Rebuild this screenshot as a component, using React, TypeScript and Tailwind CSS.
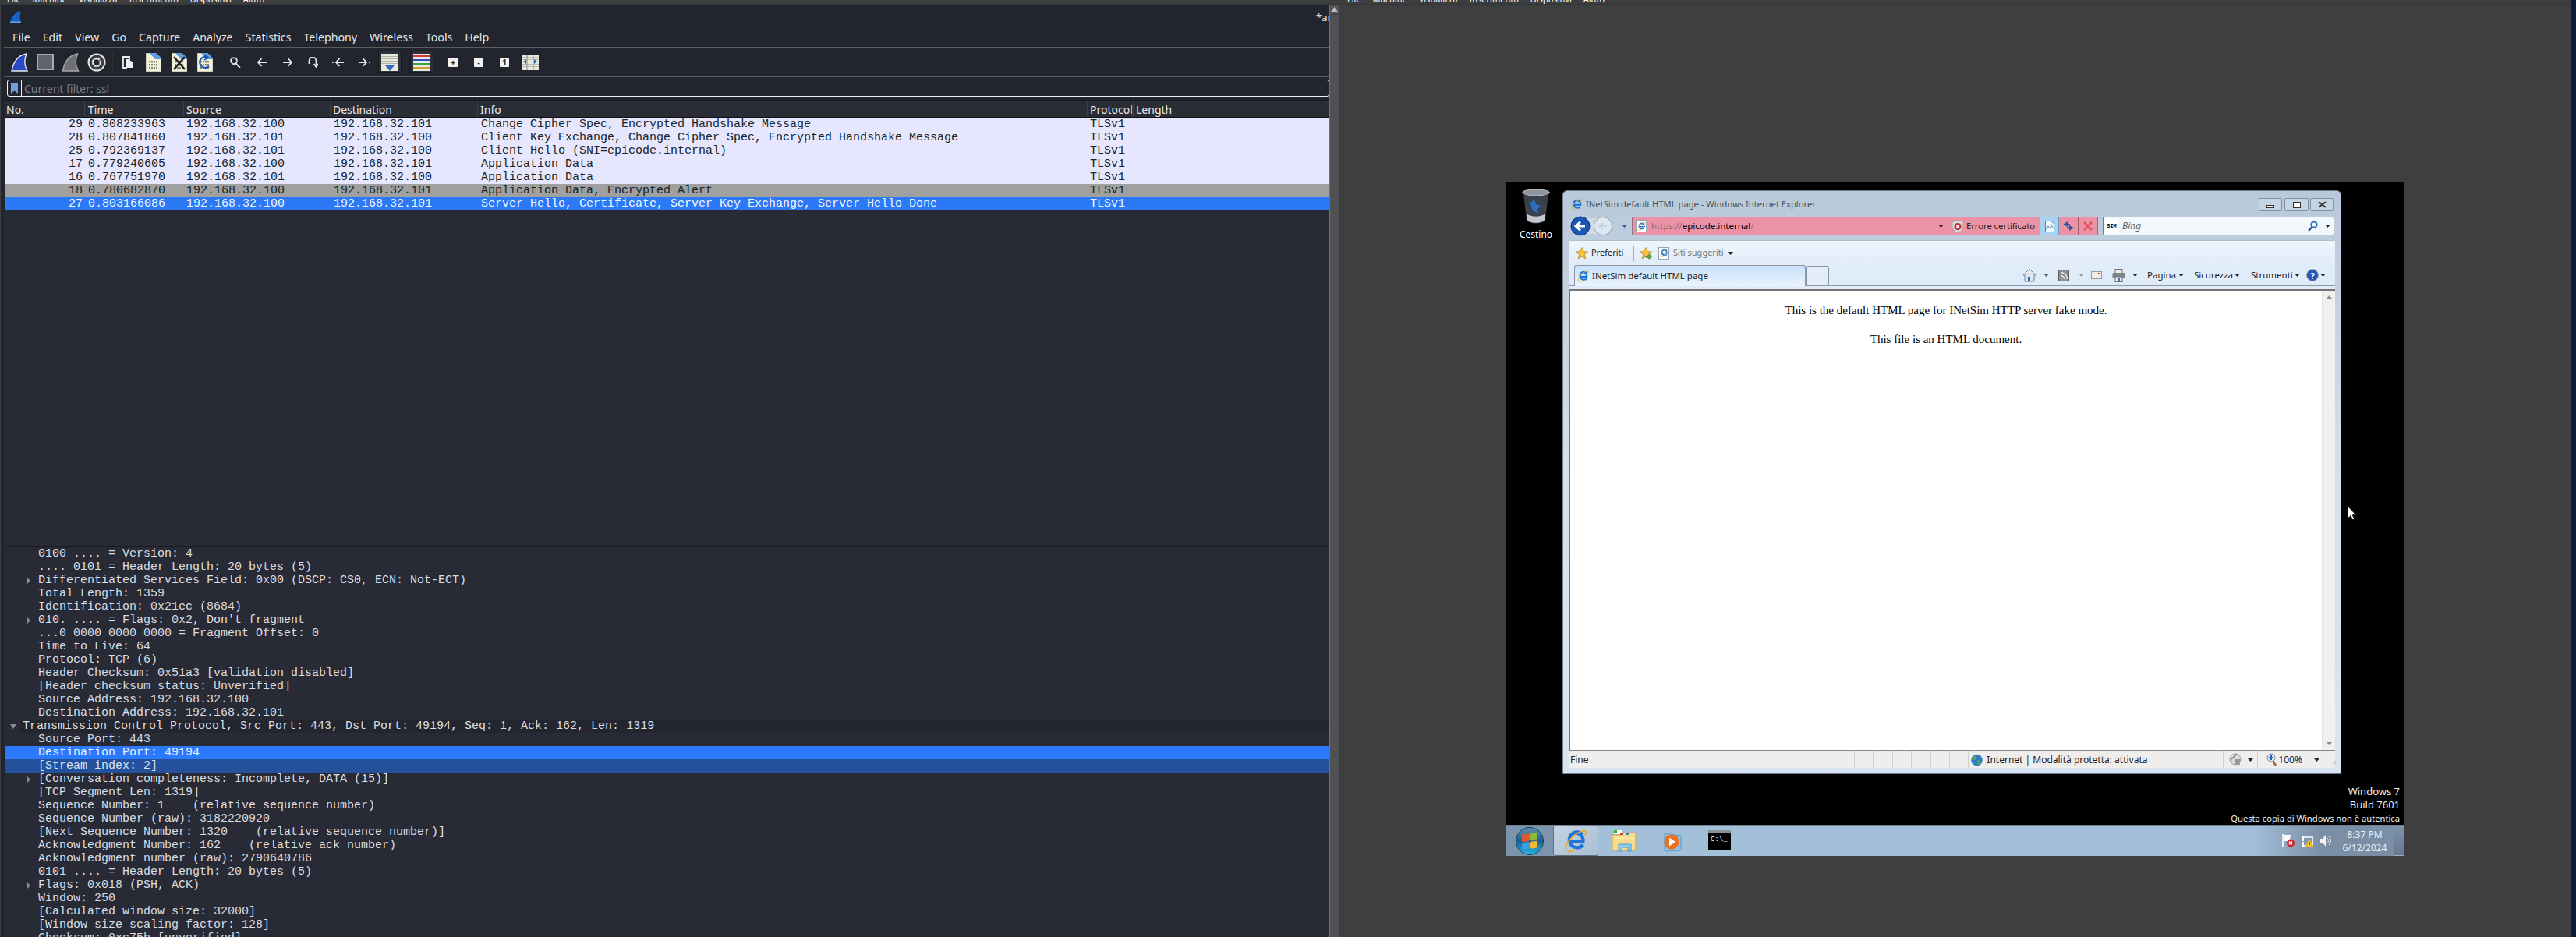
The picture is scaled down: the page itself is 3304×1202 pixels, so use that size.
import React from "react";

const UI = { fontFamily: '"Noto Sans", sans-serif' };
const MONO = { fontFamily: '"Liberation Mono", monospace' };
const SERIF = { fontFamily: '"Liberation Serif", serif' };

function Mnemonic({ t, i = 0 }: { t: string; i?: number }) {
  return (
    <span>
      {t.slice(0, i)}
      <span className="underline underline-offset-[3px] decoration-1">{t[i]}</span>
      {t.slice(i + 1)}
    </span>
  );
}

function Fin({ w = 22, h = 24, fill = "#2b49c6", stroke = "#e8e8e8" }: { w?: number; h?: number; fill?: string; stroke?: string }) {
  return (
    <svg width={w} height={h} viewBox="0 0 22 24" className="shrink-0">
      <path d="M1 23 C3 12 9 3 20 1 C17 8 17 16 21 23 Z" fill={fill} stroke={stroke} strokeWidth="1.4" />
    </svg>
  );
}

function DocIcon({ kind }: { kind: "plain" | "x" | "reload" }) {
  return (
    <svg width="20" height="24" viewBox="0 0 20 24" className="shrink-0">
      <path d="M0.5 0.5 H13 L19.5 6.5 V23.5 H0.5 Z" fill="#f3f1d8" stroke="#cfd2c0" strokeWidth="1" />
      <path d="M5 0 H13 L20 6.5 V8 H12 Z" fill="#5f9bdc" />
      <g fill="#7c7e72">
        {[10, 14, 18].map((y) =>
          [4, 7, 10, 13].map((x) => <rect key={`${x}-${y}`} x={x} y={y} width="2" height="2.4" />)
        )}
      </g>
      {kind === "x" && <path d="M3 5 L17 21 M17 5 L3 21" stroke="#1c1c1c" strokeWidth="2.4" />}
      {kind === "reload" && (
        <g fill="none" stroke="#1f55b8" strokeWidth="2.2">
          <path d="M14 6 A7 7 0 1 0 15 17" />
          <path d="M9 2 L14 6 L9 9" strokeWidth="1.6" />
        </g>
      )}
    </svg>
  );
}

function Stroke({ w = 14, h = 14, d, vb = "0 0 14 14", sw = 1.8 }: { w?: number; h?: number; d: string; vb?: string; sw?: number }) {
  return (
    <svg width={w} height={h} viewBox={vb} className="shrink-0">
      <path d={d} fill="none" stroke="#e6e6e6" strokeWidth={sw} />
    </svg>
  );
}

function Tbtn({ c }: { c: string }) {
  return (
    <div className="w-[12px] h-[12px] bg-[#f2f2f2] rounded-[1px] flex items-center justify-center text-[#222] text-[10px] font-bold leading-none shrink-0" style={UI}>
      {c}
    </div>
  );
}

function Toolbar() {
  return (
    <div className="h-[38px] flex items-center border-b border-[#5b5d62] pl-[9px]">
      <Fin />
      <div className="ml-[11px] w-[22px] h-[21px] bg-[#62646c] border-[2px] border-[#a9abb0] shrink-0" />
      <div className="ml-[10px]">
        <Fin w={23} fill="#6e7075" stroke="#a6a8ab" />
      </div>
      <svg width="24" height="24" viewBox="0 0 24 24" className="ml-[10px] shrink-0">
        <circle cx="12" cy="12" r="10.5" fill="#3a3c42" stroke="#e6e6e6" strokeWidth="2" />
        <circle cx="12" cy="12" r="5" fill="none" stroke="#e6e6e6" strokeWidth="2.4" strokeDasharray="3 1" />
        <circle cx="12" cy="12" r="2.6" fill="#22252e" />
      </svg>
      <div className="ml-[8px] w-px h-[24px] bg-[#2f3239] shrink-0" />
      <svg width="15" height="16" viewBox="0 0 15 16" className="ml-[12px] shrink-0">
        <path d="M1 1 H9 V5 H5 V15 H1 Z" fill="none" stroke="#f0f0f0" strokeWidth="1.8" />
        <path d="M5 6 H11 L14 9 V15 H5 Z" fill="#f0f0f0" />
      </svg>
      <div className="ml-[15px]"><DocIcon kind="plain" /></div>
      <div className="ml-[13px]"><DocIcon kind="x" /></div>
      <div className="ml-[13px]"><DocIcon kind="reload" /></div>
      <div className="ml-[10px] w-px h-[24px] bg-[#2f3239] shrink-0" />
      <div className="ml-[11px]"><Stroke d="M9 5.2 A4 4 0 1 1 9 5 M8 9 L13 14" /></div>
      <div className="ml-[20px]"><Stroke d="M13 7 H2 M6.5 2 L2 7 L6.5 12" /></div>
      <div className="ml-[19px]"><Stroke d="M1 7 H12 M7.5 2 L12 7 L7.5 12" /></div>
      <div className="ml-[18px]"><Stroke d="M2.5 9 V5 A4 4 0 0 1 11.5 5 V12 M8.5 9 L11.5 13 L14 9" /></div>
      <div className="ml-[18px]"><Stroke w={16} vb="0 0 16 14" d="M15 7 H6 M9.5 2 L5 7 L9.5 12 M1 6 V8" /></div>
      <div className="ml-[17px]"><Stroke w={16} vb="0 0 16 14" d="M1 7 H10 M6.5 2 L11 7 L6.5 12 M15 6 V8" /></div>
      <div className="ml-[10px] w-[30px] h-[29px] bg-[#2d3038] border border-[#17191e] rounded-[3px] flex items-center justify-center shrink-0">
        <svg width="24" height="24" viewBox="0 0 24 24">
          <rect x="1" y="1" width="22" height="22" fill="#e9e9dd" />
          {[4, 7, 10, 13].map((y) => <rect key={y} x="1" y={y} width="22" height="1" fill="#b3b3a8" />)}
          <path d="M6 16 H18 L12 23 Z" fill="#2f6cc0" />
        </svg>
      </div>
      <div className="ml-[11px] w-[30px] h-[29px] bg-[#2d3038] border border-[#17191e] rounded-[3px] flex items-center justify-center shrink-0">
        <svg width="24" height="24" viewBox="0 0 24 24">
          <rect x="1" y="1" width="22" height="22" fill="#e9e9e9" />
          <rect x="1" y="3" width="22" height="2" fill="#d23a32" />
          <rect x="1" y="8" width="22" height="2" fill="#2f4fc0" />
          <rect x="1" y="13" width="22" height="2" fill="#3aa63a" />
          <rect x="1" y="18" width="22" height="2" fill="#d0a020" />
        </svg>
      </div>
      <div className="ml-[19px]"><Tbtn c="+" /></div>
      <div className="ml-[21px]"><Tbtn c="-" /></div>
      <div className="ml-[21px]"><Tbtn c="1" /></div>
      <svg width="22" height="20" viewBox="0 0 22 20" className="ml-[16px] shrink-0">
        <rect width="22" height="20" fill="#e9e9dd" />
        {[3, 6, 9, 12, 15, 18].map((y) => <rect key={y} y={y} width="22" height="1" fill="#bcbcb0" />)}
        <path d="M7 0 V20 M15 0 V20" stroke="#8a8a80" />
        <path d="M6 6 L2 9 L6 12 Z M16 6 L20 9 L16 12 Z" fill="#2f6cc0" />
      </svg>
    </div>
  );
}

const PACKETS = [
  ["29", "0.808233963", "192.168.32.100", "192.168.32.101", "Change Cipher Spec, Encrypted Handshake Message"],
  ["28", "0.807841860", "192.168.32.101", "192.168.32.100", "Client Key Exchange, Change Cipher Spec, Encrypted Handshake Message"],
  ["25", "0.792369137", "192.168.32.101", "192.168.32.100", "Client Hello (SNI=epicode.internal)"],
  ["17", "0.779240605", "192.168.32.100", "192.168.32.101", "Application Data"],
  ["16", "0.767751970", "192.168.32.101", "192.168.32.100", "Application Data"],
  ["18", "0.780682870", "192.168.32.100", "192.168.32.101", "Application Data, Encrypted Alert"],
  ["27", "0.803166086", "192.168.32.100", "192.168.32.101", "Server Hello, Certificate, Server Key Exchange, Server Hello Done"],
];

function PacketRow({ p, i }: { p: string[]; i: number }) {
  const bg = i === 6 ? "bg-[#2b79f6] text-[#f2f6fd]" : i === 5 ? "bg-[#a0a0a0] text-[#12272e]" : "bg-[#e7e6ff] text-[#12272e]";
  return (
    <div className={`h-[17px] flex relative whitespace-pre text-[15px] leading-[17px] ${bg}`} style={MONO}>
      {i < 3 && <div className="absolute left-[9px] top-0 bottom-0 w-px bg-[#12272e]" />}
      {i === 6 && <div className="absolute left-[9px] top-0 bottom-0 w-px bg-[#9cc0fa]" />}
      <div className="w-[100px] text-right">{p[0]}</div>
      <div className="w-[133px] pl-[7px]">{p[1]}</div>
      <div className="w-[189px]">{p[2]}</div>
      <div className="w-[189px]">{p[3]}</div>
      <div className="w-[781px]">{p[4]}</div>
      <div>TLSv1</div>
    </div>
  );
}

const TREE: [string, number, string?][] = [
  ["0100 .... = Version: 4", 0],
  [".... 0101 = Header Length: 20 bytes (5)", 0],
  ["Differentiated Services Field: 0x00 (DSCP: CS0, ECN: Not-ECT)", 1],
  ["Total Length: 1359", 0],
  ["Identification: 0x21ec (8684)", 0],
  ["010. .... = Flags: 0x2, Don't fragment", 1],
  ["...0 0000 0000 0000 = Fragment Offset: 0", 0],
  ["Time to Live: 64", 0],
  ["Protocol: TCP (6)", 0],
  ["Header Checksum: 0x51a3 [validation disabled]", 0],
  ["[Header checksum status: Unverified]", 0],
  ["Source Address: 192.168.32.100", 0],
  ["Destination Address: 192.168.32.101", 0],
  ["Transmission Control Protocol, Src Port: 443, Dst Port: 49194, Seq: 1, Ack: 162, Len: 1319", 2],
  ["Source Port: 443", 0],
  ["Destination Port: 49194", 0, "sel"],
  ["[Stream index: 2]", 0, "rel"],
  ["[Conversation completeness: Incomplete, DATA (15)]", 1],
  ["[TCP Segment Len: 1319]", 0],
  ["Sequence Number: 1    (relative sequence number)", 0],
  ["Sequence Number (raw): 3182220920", 0],
  ["[Next Sequence Number: 1320    (relative sequence number)]", 0],
  ["Acknowledgment Number: 162    (relative ack number)", 0],
  ["Acknowledgment number (raw): 2790640786", 0],
  ["0101 .... = Header Length: 20 bytes (5)", 0],
  ["Flags: 0x018 (PSH, ACK)", 1],
  ["Window: 250", 0],
  ["[Calculated window size: 32000]", 0],
  ["[Window size scaling factor: 128]", 0],
  ["Checksum: 0xc75b [unverified]", 0],
];

function TreeRow({ r }: { r: [string, number, string?] }) {
  const [t, kind, state] = r;
  const bg = state === "sel" ? "bg-[#2b79fd] text-[#e9f1ff]" : state === "rel" ? "bg-[#24509c] text-[#d9e2f2]" : "text-[#dcdde0]";
  if (kind === 2) {
    return (
      <div className="h-[17px] flex items-center whitespace-pre text-[15px] leading-[17px] text-[#dcdde0]" style={MONO}>
        <svg width="8" height="6" viewBox="0 0 8 6" className="ml-[7px] shrink-0"><path d="M0 0 H8 L4 6 Z" fill="#8a8c92" /></svg>
        <div className="ml-[5px] flex-1 pl-[3px] bg-[#23262f]">{t}</div>
      </div>
    );
  }
  return (
    <div className={`h-[17px] flex items-center whitespace-pre text-[15px] leading-[17px] ${bg}`} style={MONO}>
      <div className="w-[43px] flex justify-end pr-[10px] shrink-0">
        {kind === 1 && <svg width="5" height="10" viewBox="0 0 5 10"><path d="M0 0 L5 5 L0 10 Z" fill="#8a8c92" /></svg>}
      </div>
      <div>{t}</div>
    </div>
  );
}

function Wireshark() {
  const hdr = [
    ["No.", "w-[102px] pl-[2px]"],
    ["Time", "w-[127px] pl-[4px] border-l border-[#3d4048]"],
    ["Source", "w-[188px] pl-[3px] border-l border-[#3d4048]"],
    ["Destination", "w-[189px] pl-[3px] border-l border-[#3d4048]"],
    ["Info", "w-[782px] pl-[3px] border-l border-[#3d4048]"],
    ["Protocol", "w-[59px] pl-[3px] border-l border-[#3d4048]"],
    ["Length", "flex-1 pl-[3px] border-l border-[#3d4048]"],
  ];
  const menu: [string, number][] = [["File", 0], ["Edit", 0], ["View", 0], ["Go", 0], ["Capture", 0], ["Analyze", 0], ["Statistics", 0], ["Telephony", 0], ["Wireless", 0], ["Tools", 0], ["Help", 0]];
  return (
    <div className="w-[1718px] h-[1202px] shrink-0 flex flex-col border-r border-[#8f9092]">
      <TopStrip pl="pl-[9px]" />
      <div className="flex-1 flex min-h-0">
        <div className="ml-px w-[1704px] bg-[#22252e] border-t border-[#15171c] rounded-tl-[3px] pl-[4px] flex flex-col text-[#e8e8e8] overflow-hidden" style={UI}>
          <div className="h-[29px] flex items-start justify-between shrink-0">
            <svg width="16" height="16" viewBox="0 0 16 16" className="ml-[7px] mt-[7px]">
              <path d="M1 15 C2 8 7 2 15 0 C13 5 13 10 15 15 Z" fill="#1a62c8" />
              <path d="M1 15 H15 L14.6 13.5 H1.4 Z" fill="#67a6ec" />
            </svg>
            <span className="mt-[9px] text-[13px] leading-[13px] w-[17px] overflow-hidden whitespace-nowrap">*an</span>
          </div>
          <div className="h-[25px] shrink-0 flex items-center gap-[16px] pl-[11px] border-b border-[#5b5d62] text-[14.2px]">
            {menu.map(([m, i]) => <Mnemonic key={m} t={m} i={i} />)}
          </div>
          <div className="shrink-0"><Toolbar /></div>
          <div className="shrink-0 mt-[3px] ml-[4px] h-[22px] border border-[#f0f0f0] rounded-[3px] flex items-center">
            <div className="w-[18px] h-full border-r border-[#f0f0f0] flex items-center justify-center shrink-0">
              <svg width="9" height="14" viewBox="0 0 9 14"><path d="M0 0 H9 V14 L4.5 10.5 L0 14 Z" fill="#6d9fdc" /></svg>
            </div>
            <span className="ml-[3px] text-[14px] text-[#7c7e83]">Current filter: ssl</span>
          </div>
          <div className="shrink-0 h-[5px] border-b border-[#191b20]" />
          <div className="shrink-0 ml-px h-[22px] flex bg-[#2a2d36] border-b border-[#0e0f13] text-[14px] leading-[23px] whitespace-nowrap">
            {hdr.map(([t, c]) => <div key={t} className={c}>{t}</div>)}
          </div>
          <div className="shrink-0 ml-px">
            {PACKETS.map((p, i) => <PacketRow key={p[0]} p={p} i={i} />)}
          </div>
          <div className="flex-1 ml-px bg-[#282b36]" />
          <div className="shrink-0 ml-px h-[6px] bg-[#282b36] border-y border-[#1a1c22]" />
          <div className="shrink-0 ml-px h-[500px] bg-[#282a35] overflow-hidden">
            {TREE.map((r) => <TreeRow key={r[0]} r={r} />)}
          </div>
        </div>
        <div className="flex-1 bg-[#4f5152] border-l border-[#6f7173] flex flex-col">
          <div className="h-[13px] border-b border-[#3a3b3d] flex items-center justify-center">
            <svg width="9" height="6" viewBox="0 0 9 6"><path d="M0 6 L4.5 0 L9 6 Z" fill="#b9bbbd" /></svg>
          </div>
        </div>
      </div>
    </div>
  );
}

function TopStrip({ pl }: { pl: string }) {
  return (
    <div className={`h-[6px] shrink-0 overflow-hidden bg-[#3c3d3f] border-b border-[#343537] ${pl}`}>
      <div className="-mt-[11px] flex gap-[15px] text-[11px] leading-[20px] text-white whitespace-nowrap" style={UI}>
        <span>File</span><span>Machine</span><span>Visualizza</span><span>Inserimento</span><span>Dispositivi</span><span>Aiuto</span>
      </div>
    </div>
  );
}

function IELogo({ s = 16 }: { s?: number }) {
  return (
    <svg width={s} height={s} viewBox="0 0 24 24" className="shrink-0">
      <path d="M19 5 A8 8 0 1 0 19.5 16 M5 12.5 H19.5 V10 A7.5 7.5 0 0 0 6 7" fill="none" stroke="#1f74d8" strokeWidth="3.4" />
      <path d="M2 22 C0 17 8 5 18 2 C23 0 24 3 21 7 M3 22 C5 24 9 22 12 20" fill="none" stroke="#e8ac2a" strokeWidth="1.4" />
    </svg>
  );
}

function Caret({ c = "#222", className = "" }: { c?: string; className?: string }) {
  return (
    <svg width="7" height="4" viewBox="0 0 7 4" className={`shrink-0 ${className}`}>
      <path d="M0 0 H7 L3.5 4 Z" fill={c} />
    </svg>
  );
}

function StarIcon({ add = false }: { add?: boolean }) {
  return (
    <svg width="16" height="16" viewBox="0 0 16 16" className="shrink-0">
      <path d="M8 0.5 L10.2 5.6 L15.5 6 L11.4 9.6 L12.8 15 L8 12 L3.2 15 L4.6 9.6 L0.5 6 L5.8 5.6 Z" fill="#f7c23c" stroke="#b57d14" strokeWidth="0.7" />
      {add && <path d="M8 11 H12 V8.5 L16 12 L12 15.5 V13.5 H8 Z" fill="#47b23c" stroke="#2b7a25" strokeWidth="0.5" />}
    </svg>
  );
}

function DocLogo() {
  return (
    <div className="w-[14px] h-[16px] bg-white border border-[#9aa6b2] flex items-center justify-center shrink-0">
      <IELogo s={11} />
    </div>
  );
}

function IEWindow() {
  const nav = (
    <div className="h-[24px] flex shrink-0">
      <div className="w-[81px] flex items-center shrink-0">
        <svg width="58" height="26" viewBox="0 0 58 26" className="ml-[3px] shrink-0 overflow-visible">
          <rect x="10" y="3" width="38" height="20" rx="10" fill="#cfdbe6" />
          <circle cx="41" cy="13" r="11.5" fill="#dfe8f0" stroke="#8fa0b0" />
          <path d="M36 13 H46 M41 9 L36 13 L41 17" fill="none" stroke="#c4d0db" strokeWidth="2" />
          <circle cx="12" cy="13" r="12" fill="#1a55b4" stroke="#0e2f66" />
          <path d="M6 13 H18 M12 7.5 L6 13 L12 18.5" fill="none" stroke="#fff" strokeWidth="3" />
        </svg>
        <Caret c="#2d5c9c" className="ml-[7px]" />
      </div>
      <div className="w-[598px] shrink-0 bg-[#ec92a6] border border-[#8d7480] flex items-center text-[11.5px]">
        <div className="ml-[4px]"><DocLogo /></div>
        <span className="ml-[6px] text-[#8d6b76]">https://<span className="text-black">epicode.internal</span>/</span>
        <div className="flex-1" />
        <Caret />
        <svg width="14" height="17" viewBox="0 0 14 17" className="ml-[11px] shrink-0">
          <path d="M7 0 L14 2.5 V9 C14 13 10 16 7 17 C4 16 0 13 0 9 V2.5 Z" fill="#d8d8d8" stroke="#8a8a8a" strokeWidth="0.6" />
          <circle cx="7" cy="8.5" r="4.6" fill="#cc2a36" />
          <path d="M5 6.5 L9 10.5 M9 6.5 L5 10.5" stroke="#fff" strokeWidth="1.4" />
        </svg>
        <span className="ml-[4px] text-[11.2px] text-[#1d1d1d] whitespace-nowrap w-[94px]">Errore certificato</span>
        <div className="w-[25px] h-full bg-[#a6d3ef] border-x border-[#6d9cc0] flex items-center justify-center shrink-0">
          <svg width="12" height="15" viewBox="0 0 12 15">
            <path d="M0.5 0.5 H8 L11.5 4 V14.5 H0.5 Z" fill="#eef6fb" stroke="#4f86b8" />
            <path d="M1 11 L4 7 L6 10 L8 6 L11 10" fill="none" stroke="#4f86b8" />
          </svg>
        </div>
        <div className="w-[25px] h-full border-r border-[#a35a6e] flex items-center justify-center shrink-0">
          <svg width="16" height="14" viewBox="0 0 16 14">
            <path d="M7 1 L1 5 L7 8 V6 H10 V4 H7 Z M9 13 L15 9 L9 6 V8 H6 V10 H9 Z" fill="#1f5fa8" />
          </svg>
        </div>
        <div className="w-[24px] h-full flex items-center justify-center shrink-0">
          <svg width="12" height="12" viewBox="0 0 12 12"><path d="M1 1 L11 11 M11 1 L1 11" stroke="#e0525c" strokeWidth="2.6" /></svg>
        </div>
      </div>
      <div className="w-[297px] ml-[6px] shrink-0 bg-[#f3f8fc] border border-[#707e8c] rounded-[2px] flex items-center text-[12px]">
        <div className="ml-[2px] w-[17px] h-[18px] bg-white flex items-center justify-center text-[7px] font-bold text-black" style={MONO}>SIM</div>
        <span className="ml-[5px] italic text-[#5a6570]">Bing</span>
        <div className="flex-1" />
        <svg width="13" height="14" viewBox="0 0 13 14" className="shrink-0">
          <circle cx="8" cy="5" r="3.6" fill="none" stroke="#2a6fc0" strokeWidth="2" />
          <path d="M5.5 8 L1 13" stroke="#1e4f90" strokeWidth="2.2" />
        </svg>
        <Caret className="ml-[9px] mr-[4px]" />
      </div>
    </div>
  );

  return (
    <div className="absolute left-[72px] top-[10px] w-[999px] h-[749px] rounded-t-[6px] border border-[#6f7d8a] bg-gradient-to-b from-[#b8c9d9] via-[#d4e2ef] to-[#d8e5f2] px-[7px] pt-[9px] flex flex-col" style={UI}>
      <div className="h-[17px] flex items-center shrink-0">
        <div className="ml-[3px]"><IELogo s={15} /></div>
        <span className="ml-[4px] text-[11.2px] text-[#46525e] whitespace-nowrap">INetSim default HTML page - Windows Internet Explorer</span>
        <div className="flex-1" />
        <div className="w-[30px] h-[17px] border border-[#7f93a6] rounded-[2px] bg-[#c6d5e4] flex items-end justify-center pb-[3px]">
          <div className="w-[10px] h-[4px] border border-[#333] bg-white" />
        </div>
        <div className="ml-[3px] w-[31px] h-[17px] border border-[#7f93a6] rounded-[2px] bg-[#c6d5e4] flex items-center justify-center">
          <div className="w-[10px] h-[8px] border-[1.5px] border-[#333] bg-white" />
        </div>
        <div className="ml-[2px] mr-[2px] w-[30px] h-[17px] border border-[#7f93a6] rounded-[2px] bg-[#c6d5e4] flex items-center justify-center">
          <svg width="11" height="9" viewBox="0 0 11 9"><path d="M1 1 L10 8 M10 1 L1 8" stroke="#3b3b3b" strokeWidth="2" /></svg>
        </div>
      </div>
      <div className="h-[7px] shrink-0" />
      {nav}
      <div className="h-[6px] shrink-0" />
      <div className="h-[63px] shrink-0 border-t border-[#b0bfcd] bg-gradient-to-b from-[#eef5fc] via-[#e0ecf9] to-[#dfebf9] flex flex-col">
        <div className="h-[31px] flex items-center shrink-0 text-[11px]">
          <div className="ml-[9px]"><StarIcon /></div>
          <span className="ml-[4px] w-[41px] text-[#1c1c1c] whitespace-nowrap">Preferiti</span>
          <div className="ml-[13px] w-px h-[20px] bg-[#9fb0c0]" />
          <div className="ml-[7px]"><StarIcon add /></div>
          <div className="ml-[8px]"><DocLogo /></div>
          <span className="ml-[5px] text-[#6d7680] whitespace-nowrap">Siti suggeriti</span>
          <Caret className="ml-[5px]" />
        </div>
        <div className="h-[27px] flex items-end shrink-0 text-[11.5px] border-b border-[#8f9aa5]">
          <div className="ml-[7px] w-[297px] h-[27px] border border-b-0 border-[#8d98a4] rounded-t-[3px] bg-gradient-to-b from-[#c6e0fb] to-[#ecf4fe] flex items-center -mb-px">
            <div className="ml-[3px]"><IELogo s={15} /></div>
            <span className="ml-[4px] text-[#1c1c1c]">INetSim default HTML page</span>
          </div>
          <div className="w-[29px] h-[25px] ml-px border border-b-0 border-[#8d98a4] rounded-t-[3px] bg-[#e3edf9]" />
          <div className="flex-1 flex items-center h-full text-[11.5px] text-[#1c1c1c] whitespace-nowrap">
            <div className="flex-1" />
            <svg width="16" height="17" viewBox="0 0 16 17" className="shrink-0">
              <path d="M8 0 L16 8 H14 V16 H2 V8 H0 Z" fill="#dfe6ee" stroke="#4a6c90" strokeWidth="0.8" />
              <rect x="6" y="10" width="3" height="6" fill="#2a68b0" />
            </svg>
            <Caret c="#555" className="ml-[10px]" />
            <svg width="14" height="15" viewBox="0 0 14 15" className="ml-[12px] shrink-0">
              <rect x="0.5" y="0.5" width="13" height="14" fill="#8b8f92" stroke="#5e6063" />
              <path d="M3 11.5 h1.5 M3 7.5 A4.5 4.5 0 0 1 7.5 12 M3 3.5 A8.5 8.5 0 0 1 11.5 12" fill="none" stroke="#ecf2ea" strokeWidth="1.4" />
            </svg>
            <Caret c="#9a9a9a" className="ml-[12px]" />
            <div className="ml-[9px] w-[14px] h-[10px] bg-[#f0eee8] border border-[#9a9a9a] relative shrink-0">
              <div className="absolute right-[2px] top-[1px] w-[2px] h-[2px] bg-[#d0433a]" />
            </div>
            <svg width="17" height="17" viewBox="0 0 17 17" className="ml-[13px] shrink-0">
              <rect x="4" y="0.5" width="9" height="5" fill="#f0f0f0" stroke="#707070" />
              <rect x="0.5" y="5" width="16" height="7" rx="1" fill="#7d858c" />
              <rect x="4" y="10" width="9" height="6.5" fill="#f4f4f4" stroke="#707070" />
              <rect x="7" y="12" width="3" height="3" fill="#2a78c8" />
            </svg>
            <Caret className="ml-[9px]" />
            <span className="ml-[12px] w-[36px]">Pagina</span>
            <Caret className="ml-[4px]" />
            <span className="ml-[13px] w-[48px]">Sicurezza</span>
            <Caret className="ml-[4px]" />
            <span className="ml-[14px] w-[52px]">Strumenti</span>
            <Caret className="ml-[4px]" />
            <div className="ml-[8px] w-[16px] h-[16px] rounded-full bg-[#2457b6] border-[1.5px] border-[#a0a8b4] text-white text-[11px] font-bold flex items-center justify-center leading-none shrink-0">?</div>
            <Caret className="ml-[2px] mr-[12px]" />
          </div>
        </div>
        <div className="flex-1" />
      </div>
      <div className="flex-1 min-h-0 flex border-t-2 border-l-2 border-[#747474] bg-white">
        <div className="flex-1 text-center text-[15px] text-black leading-[18px]" style={SERIF}>
          <p className="mt-[16px]">This is the default HTML page for INetSim HTTP server fake mode.</p>
          <p className="mt-[19px]">This file is an HTML document.</p>
        </div>
        <div className="w-[17px] bg-[#f0f0f0] border-l border-[#e4e4e4] flex flex-col items-center justify-between py-[6px] shrink-0">
          <svg width="7" height="4" viewBox="0 0 7 4"><path d="M0 4 L3.5 0 L7 4 Z" fill="#8a8a8a" /></svg>
          <Caret c="#8a8a8a" />
        </div>
      </div>
      <div className="h-[23px] shrink-0 border-t border-[#888] bg-[#f0eded] flex items-center pt-[1px] text-[12px] text-[#1c1c1c] whitespace-nowrap">
        <div className="w-[366px] pl-[2px] shrink-0">Fine</div>
        {[0, 1, 2, 3, 4, 5].map((i) => <div key={i} className="w-[24.4px] h-full border-l border-[#d2cece] shrink-0" />)}
        <div className="w-[327px] h-full border-l border-[#d2cece] flex items-center pl-[3px] shrink-0">
          <svg width="15" height="16" viewBox="0 0 15 16" className="shrink-0">
            <circle cx="7.5" cy="8" r="7.3" fill="#2f7fc6" />
            <path d="M3 3 C6 2 8 4 7 7 C5 9 3 7 1 8 Z M9 8 C12 8 13 11 10 14 C8 13 8 10 9 8 Z" fill="#58a84c" />
          </svg>
          <span className="ml-[5px]">Internet | Modalità protetta: attivata</span>
        </div>
        <div className="w-[44px] h-full border-l border-[#d2cece] flex items-center pl-[7px] shrink-0">
          <svg width="16" height="17" viewBox="0 0 16 17" className="shrink-0">
            <circle cx="8" cy="8" r="7" fill="#dcdcdc" stroke="#9a9a9a" />
            <rect x="7" y="8" width="7" height="7" fill="#9a9a9a" />
            <path d="M3 8 L10 1" stroke="#7e7e7e" strokeWidth="1.5" />
          </svg>
          <Caret className="ml-[8px]" />
        </div>
        <div className="flex-1 h-full border-l border-[#d2cece] flex items-center pl-[11px]">
          <svg width="13" height="17" viewBox="0 0 13 17" className="shrink-0">
            <path d="M8 10 L12 16" stroke="#9a6a30" strokeWidth="2.4" />
            <circle cx="6" cy="6" r="5" fill="#dbe8f6" stroke="#7d8a98" />
            <path d="M3 6 H9 M6 3 V9" stroke="#2468c0" strokeWidth="2" />
          </svg>
          <span className="ml-[2px]">100%</span>
          <Caret className="ml-[15px]" />
          <svg width="8" height="8" viewBox="0 0 8 8" className="ml-[13px] shrink-0 mt-[8px]">
            <path d="M7 1 V2 M4 4 V5 M7 4 V5 M1 7 V8 M4 7 V8 M7 7 V8" stroke="#9a9a9a" />
          </svg>
        </div>
      </div>
      <div className="h-[7px] shrink-0" />
    </div>
  );
}

function Taskbar() {
  return (
    <div className="h-[40px] flex bg-[#a4bfda] border-t border-[#6f7f8f] shrink-0" style={UI}>
      <div className="w-[60px] h-full bg-[#7d94ad] flex items-center justify-center shrink-0">
        <div className="w-[36px] h-[36px] rounded-full bg-gradient-to-b from-[#5d8fb3] via-[#1c5f95] to-[#29b6e4] border border-[#11405f] flex items-center justify-center">
          <div className="grid grid-cols-2 gap-[1px] w-[20px] h-[20px] skew-y-[-8deg]">
            <div className="bg-[#e05a2c] rounded-[2px]" />
            <div className="bg-[#8cb83a] rounded-[2px]" />
            <div className="bg-[#3a9ee0] rounded-[2px]" />
            <div className="bg-[#f2b82e] rounded-[2px]" />
          </div>
        </div>
      </div>
      <div className="w-[58px] h-full bg-gradient-to-br from-[#c6d4e2] to-[#a9bed4] border border-[#5f7082] rounded-[2px] flex items-center justify-center shrink-0">
        <IELogo s={30} />
      </div>
      <svg width="32" height="28" viewBox="0 0 32 28" className="ml-[17px] mt-[6px] shrink-0">
        <path d="M1 6 H13 L15 3 H31 V26 H1 Z" fill="#f4dc8e" stroke="#c7a75a" />
        <rect x="3" y="0" width="10" height="5" fill="#fff" />
        <rect x="3" y="0" width="4" height="3" fill="#2cb82c" />
        <rect x="11" y="3" width="4" height="3" fill="#d23a32" />
        <rect x="18" y="3" width="4" height="3" fill="#2f86d0" />
        <path d="M4 10 H30" stroke="#fff2c0" />
        <path d="M9 27 V18 H25 V27 H21 V22 H13 V27 Z" fill="#8ccdf0" stroke="#4c9ccc" />
      </svg>
      <svg width="28" height="26" viewBox="0 0 28 26" className="ml-[32px] mt-[8px] shrink-0">
        <path d="M4 2 L25 5 V24 L4 25 Z" fill="#8cc0e4" stroke="#5e9cc8" />
        <circle cx="13" cy="13" r="9.5" fill="#ea7120" />
        <path d="M10 7.5 L18 13 L10 18.5 Z" fill="#fff" />
      </svg>
      <div className="ml-[32px] mt-[6px] w-[29px] h-[25px] bg-black border-t-[3px] border-[#8d8f92] text-white text-[9px] leading-[11px] pl-[3px] pt-[4px] shrink-0" style={MONO}>C:\_</div>
      <div className="flex-1" />
      <div className="w-[180px] h-full bg-gradient-to-r from-[#a4bfda] via-[#7a8ea6] to-[#7a8ea6] flex items-center shrink-0">
        <svg width="17" height="17" viewBox="0 0 17 17" className="ml-[37px] shrink-0">
          <path d="M1 0 V17" stroke="#fff" strokeWidth="1.6" />
          <path d="M2 1 H12 L10 5 L12 9 H2 Z" fill="#fff" />
          <circle cx="11" cy="11.5" r="5" fill="#d2252e" />
          <path d="M9 9.5 L13 13.5 M13 9.5 L9 13.5" stroke="#fff" strokeWidth="1.3" />
        </svg>
        <svg width="17" height="17" viewBox="0 0 17 17" className="ml-[7px] shrink-0">
          <rect x="1" y="3" width="3" height="6" fill="#fff" />
          <path d="M4 4 H15 V15 H4" fill="none" stroke="#fff" strokeWidth="1.6" />
          <rect x="2" y="10" width="2" height="6" fill="#fff" />
          <path d="M11 6 L17 17 H5 Z" fill="#f0c020" />
          <rect x="10.5" y="10" width="1" height="4" fill="#111" />
        </svg>
        <svg width="16" height="17" viewBox="0 0 16 17" className="ml-[7px] shrink-0">
          <path d="M1 6 H4 L8 1 V16 L4 11 H1 Z" fill="#f2f2f2" />
          <path d="M10 5 A5 5 0 0 1 10 12 M12 3 A7 7 0 0 1 12 14" fill="none" stroke="#e8e8e8" />
        </svg>
        <div className="ml-[12px] w-[60px] text-center text-[12px] leading-[17px] text-[#e8edf2] whitespace-nowrap">
          <div>8:37 PM</div>
          <div>6/12/2024</div>
        </div>
      </div>
      <div className="w-[14px] h-full bg-gradient-to-b from-[#7e93aa] to-[#64788e] border border-[#9fb0c2] shrink-0" />
    </div>
  );
}

function Desktop() {
  return (
    <div className="relative w-[1152px] h-[864px] bg-black flex flex-col shrink-0">
      <div className="absolute left-[18px] top-[8px] w-[40px] flex flex-col items-center" style={UI}>
        <svg width="36" height="46" viewBox="0 0 36 46">
          <ellipse cx="18" cy="5" rx="17.5" ry="4" fill="#8c949c" stroke="#c8cdd2" />
          <path d="M2 6 L6 40 C8 46 28 46 30 40 L34 6 C28 11 8 11 2 6 Z" fill="#39424c" />
          <path d="M6 32 L7 40 C10 45 26 45 29 40 L30 32 C24 37 12 37 6 32 Z" fill="#c4c8cc" />
          <path d="M11 18 L16 14 L18 20 L24 22 L19 27 L22 32 L15 29 L12 24 Z" fill="#2f6ebc" />
        </svg>
        <span className="mt-[5px] text-[12px] leading-[15px] text-white">Cestino</span>
      </div>
      <IEWindow />
      <svg width="12" height="19" viewBox="0 0 12 19" className="absolute left-[1079px] top-[415px]">
        <path d="M0.5 0.5 V16 L4 12.6 L6.4 18 L8.8 17 L6.4 11.8 H11 Z" fill="#fff" stroke="#000" strokeWidth="1" />
      </svg>
      <div className="flex-1 flex flex-col justify-end items-end pr-[6px] text-[#f0f0f0] whitespace-nowrap" style={UI}>
        <div className="text-[13px] leading-[17px]">Windows 7</div>
        <div className="text-[13px] leading-[17px]">Build 7601</div>
        <div className="text-[11.2px] leading-[17px]">Questa copia di Windows non è autentica</div>
      </div>
      <Taskbar />
    </div>
  );
}

export default function App() {
  return (
    <div className="w-[3304px] h-[1202px] overflow-hidden flex bg-[#3e3f41]">
      <Wireshark />
      <div className="flex-1 flex flex-col min-w-0">
        <TopStrip pl="pl-[10px]" />
        <div className="flex-1 pl-[214px] pt-[228px]">
          <Desktop />
        </div>
      </div>
      <div className="w-px h-full bg-[#8a8b8d] shrink-0" />
      <div className="w-[6px] h-full bg-[#0a1b3c] shrink-0" />
    </div>
  );
}
